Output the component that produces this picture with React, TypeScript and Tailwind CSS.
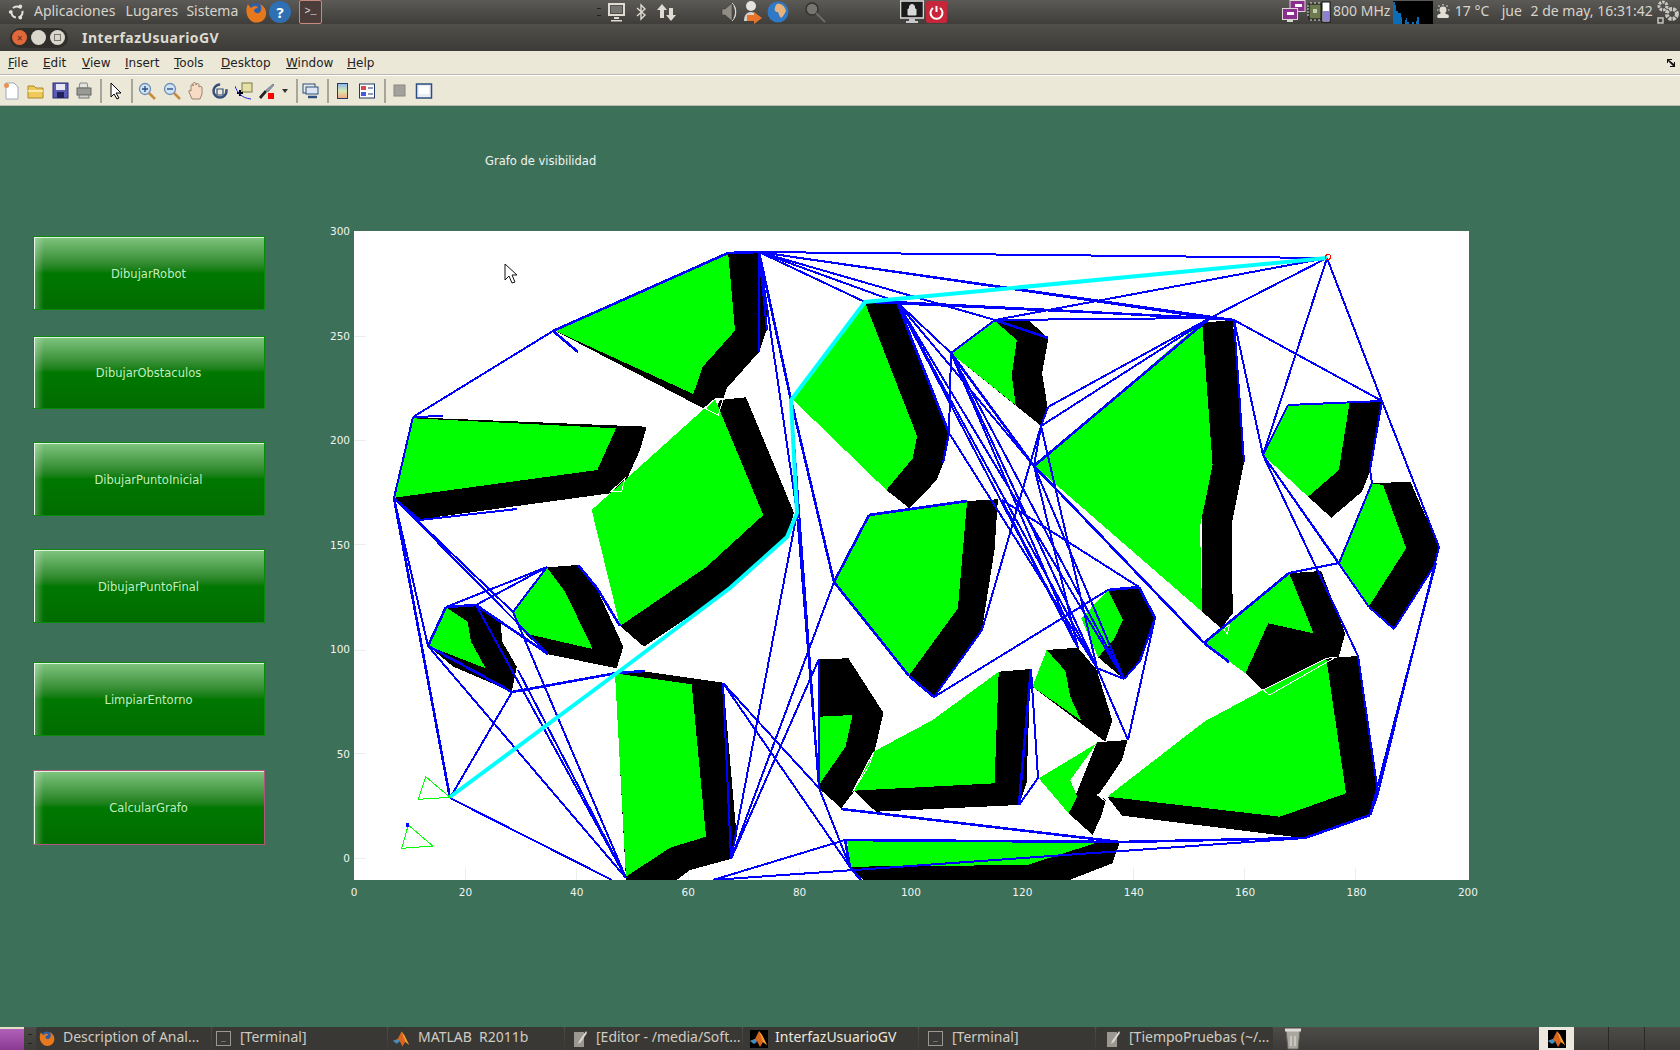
import React from "react";

// zoom crop origins, so shapes can be read straight off the crops
const zones: Record<string, [number, number, number]> = {
  A: [340, 220, 1 / 3],
  B: [340, 550, 1 / 3],
  C: [800, 220, 0.421],
  D: [800, 550, 0.421],
};

function pts(s: string) {
  return s
    .trim()
    .split(/\s+/)
    .map((t) => {
      const z = zones[t[0]];
      const [x, y] = t.slice(1).split(",").map(Number);
      return `${(z[0] + x * z[2]).toFixed(1)},${(z[1] + y / 3).toFixed(1)}`;
    })
    .join(" ");
}

// black hull first, then the green core on top
const obstacles: [string, string][] = [
  ["A645,332 A1165,100 A1258,97 A1282,270 A1280,330 A1258,395 A1160,505 A1150,535 A1125,535 A1090,565", "A645,332 A1165,103 A1185,332 A1088,440 A1060,522"],
  ["A220,592 A920,620 A900,690 A862,775 A810,820 A240,898 A163,833", "A220,595 A828,625 A772,750 A163,833"],
  ["A1140,540 A1218,532 A1362,878 A1340,950 B1175,115 B912,290 B840,228", "A1125,537 A1270,885 B1100,50 B840,228 A755,870"],
  ["B318,170 B408,165 B482,220 B487,275 B530,350 B515,425 B340,350 B265,288", "B318,172 B383,215 B393,275 B437,355 B265,288"],
  ["B620,52 B715,45 B770,115 B850,290 B830,355 B625,313 B553,250", "B620,52 B675,125 B758,297 B553,250 B520,185"],
  ["B825,365 B920,365 B1150,398 B1190,860 B1172,927 B1050,960 B1010,990 B858,990", "B825,370 B1055,403 B1098,860 B990,893 B858,980"],
  ["C155,250 C230,245 C355,640 C340,730 C325,780 C260,865 C205,810", "C155,250 A1360,540 C205,810 C268,715 C278,648"],
  ["C462,300 C540,297 C590,355 C575,460 C588,560 C573,618 C358,400", "C462,302 C515,360 C503,465 C512,555 C358,400"],
  ["C955,308 C1028,300 C1055,725 C1025,915 D1028,190 D1000,235 D955,185", "C955,305 C980,735 C950,920 D955,185 C557,738"],
  ["C1160,557 C1380,542 C1355,750 C1335,815 C1262,893 C1207,830", "C1160,557 C1305,550 C1280,750 C1207,830 C1100,705"],
  ["C1358,790 C1450,785 C1518,980 D1510,40 D1412,238 D1352,172", "C1358,790 C1385,795 C1440,985 D1350,172 D1280,40"],
  ["C397,843 C470,838 D462,0 D432,240 D318,442 D258,378", "C165,885 C397,843 D375,175 D258,378 D80,95"],
  ["D45,328 D115,325 D198,488 D178,600 D128,725 D98,775 D45,715", "D45,500 D125,495 D108,590 D45,705"],
  ["D472,365 D548,357 D538,700 D520,765 D180,785 D128,722", "D175,605 D315,510 D472,365 D462,700 D128,722"],
  ["D732,120 D805,112 D843,205 D808,333 D770,388 D708,322", "D732,120 D767,210 D745,270 D708,322 D668,205"],
  ["D586,300 D660,293 D705,360 D742,512 D725,575 D552,410", "D586,300 D630,362 D642,440 D668,512 D552,410"],
  ["D705,577 D778,570 D765,630 D725,705 D708,735 D727,750 D715,800 D695,855 D638,790", "D705,580 D642,690 D658,740 D638,790 D567,685"],
  ["D1250,325 D1325,318 D1372,730 D1355,795 D1200,865 D765,797 D730,740", "D1250,325 D1297,730 D1140,800 D730,740 D960,515 D1100,420"],
  ["D1162,70 D1238,63 D1295,250 D1280,320 D1250,325 D1100,420 D1058,370", "D1162,70 D1220,250 D1112,220 D1058,370 D960,280"],
  ["D112,870 D760,875 D742,940 D640,990 D150,990 D118,950", "D112,870 D700,880 D540,945 D118,950"],
];

const outlines = [
  "A1095,565 A1125,537 A1150,535 A1135,585",
  "A855,775 A845,815 A812,815",
  "D1100,420 D1250,325 D1272,322 D1115,435",
  "D175,605 D165,645 D125,725",
  "D707,735 D727,720 D733,738 D727,755",
  "D1020,225 D1015,252 D1005,235",
];

// graph vertices in page pixels
const V: Record<string, [number, number]> = {
  G: [1327, 258], a: [728, 253], b: [759, 252], c: [553, 331], d: [413, 417], e: [394, 498], f: [578, 352],
  g: [759, 352], h: [767, 330], i: [791, 400], j: [797, 513], k: [865, 302], l: [897, 302], m: [949, 433],
  n: [943, 463], o: [951, 353], p: [995, 320], q: [1048, 338], r: [1041, 426], s: [1048, 407], t: [1034, 466],
  u: [1210, 318], v: [1234, 320], w: [1244, 462], x: [1263, 455], y: [1382, 401], z: [1370, 470], aa: [1372, 483],
  ab: [1439, 547], ac: [1436, 563], ad: [1394, 629], ae: [1339, 563], af: [1369, 607], ag: [1289, 573], ah: [1204, 643],
  ai: [1229, 662], aj: [1358, 656], ak: [1378, 793], al: [1370, 815], am: [1305, 838], an: [834, 582], ao: [869, 515],
  ap: [967, 501], aq: [909, 676], ar: [934, 697], as: [883, 713], at: [819, 659], au: [819, 788], av: [841, 809],
  aw: [1031, 669], ax: [1019, 805], ay: [1038, 778], az: [1108, 590], ba: [1139, 587], bb: [1155, 618], bc: [1140, 661],
  bd: [1124, 679], be: [1128, 740], bf: [1097, 668], bg: [1078, 648], bh: [845, 840], bi: [850, 867], bj: [861, 880],
  bk: [1120, 842], bl: [446, 607], bm: [547, 567], bn: [428, 646], bo: [476, 605], bp: [548, 654], bq: [513, 612],
  br: [512, 692], bs: [518, 670], bt: [617, 673], bu: [645, 671], bv: [723, 683], bw: [731, 859], bx: [450, 798],
  by: [626, 878], bz: [578, 565], ca: [620, 626], cb: [597, 588], cc: [612, 880], cd: [713, 880], ce: [1002, 500],
  cf: [982, 630], cg: [1288, 405], ch: [443, 416], ci: [420, 520], cj: [517, 509],
};

const thinEdges =
  "b-G b-u b-v b-p b-l b-k b-h b-g b-j c-d d-e p-G u-G k-u l-u l-v p-u v-y y-ab G-y G-x x-cg y-cg y-z z-aa " +
  "v-x v-w x-ae x-aj x-af ae-aa e-bn e-bx e-bq e-bp bq-by bo-by bs-by bn-by bx-cc bx-br bl-bm bm-bq " +
  "bv-bw bw-j bw-an bw-at bv-au bv-bi au-bi j-au i-au at-au cd-bh bm-bo " +
  "l-bf l-bg l-bd l-t o-bf o-bg o-bd o-m o-p l-o m-n t-bg t-bd r-bf r-s r-t s-u r-u " +
  "cf-r ar-cf ar-az ce-ba ce-bg t-ah m-bf bb-bc bc-bd bd-bf bf-be bb-be ba-bb ae-ag aj-ak " +
  "ab-ak ad-ac af-ad cd-am ay-ax aw-ay ac-al d-ch e-ci ci-cj";
const thickEdges =
  "a-b c-a c-f b-i i-an an-ao ao-ap an-aq ar-aq e-bx br-bt bt-bu bl-bn bl-bo bo-bp bn-br bz-cb cb-ca " +
  "t-u t-ah ah-ai ag-ah o-t l-m k-l av-bk bh-bk bk-am am-al al-ak bh-bi bi-bj aw-ax az-ba u-v ba-bb p-q";

function edgePath(list: string) {
  return list
    .trim()
    .split(/\s+/)
    .map((pair) => {
      const [p, q] = pair.split("-");
      return `M${V[p][0]} ${V[p][1]}L${V[q][0]} ${V[q][1]}`;
    })
    .join("");
}

function Plot() {
  return (
    <svg viewBox="354 231 1115 649" className="block h-[649px] w-[1115px] bg-white" shapeRendering="crispEdges">
      {/* faint ticks */}
      <path
        d="M354 336h12M354 440h12M354 544h12M354 650h12M354 753h12M354 858h12M465 880v-12M576 880v-12M688 880v-12M799 880v-12M910 880v-12M1021 880v-12M1133 880v-12M1244 880v-12M1355 880v-12"
        stroke="#e8efec"
        strokeWidth="1"
      />
      {obstacles.map(([hull, core], n) => (
        <g key={n}>
          <polygon points={pts(hull)} fill="#000" />
          <polygon points={pts(core)} fill="#00ff00" />
        </g>
      ))}
      {outlines.map((o, n) => (
        <polygon key={n} points={pts(o)} fill="none" stroke="#fff" strokeWidth="1" />
      ))}
      <path d={edgePath(thinEdges)} stroke="#0000ff" strokeWidth="2" fill="none" />
      <path d={edgePath(thickEdges)} stroke="#0000ff" strokeWidth="2.6" fill="none" />
      <polyline
        points="450,797 617,673 730,588 787,537 797,513 791,400 865,302 1327,258"
        fill="none"
        stroke="#00ffff"
        strokeWidth="4"
        shapeRendering="auto"
      />
      <polygon points={pts("B257,680 B235,748 B330,742")} fill="none" stroke="#00ff00" strokeWidth="1" />
      <polygon points={pts("B205,825 B185,895 B278,888")} fill="none" stroke="#00ff00" strokeWidth="1" />
      <rect x="406" y="823" width="3" height="4" fill="#0000ff" />
      <circle cx="1328" cy="257" r="2.5" fill="none" stroke="#ff0000" strokeWidth="1" />
      {/* mouse pointer */}
      <path
        d="M505 264v16l4-4 3 7 3-1-3-7h5z"
        fill="#fff"
        stroke="#111"
        strokeWidth="1"
        shapeRendering="auto"
      />
    </svg>
  );
}

function UbuntuLogo() {
  return (
    <svg width="18" height="18" viewBox="0 0 18 18" className="ml-[8px]">
      <circle cx="9" cy="9" r="5.6" fill="none" stroke="#e6e2da" strokeWidth="2" strokeDasharray="9 2.7" strokeDashoffset="2" />
      <circle cx="2.6" cy="9" r="1.8" fill="#e6e2da" />
      <circle cx="12.4" cy="3.2" r="1.8" fill="#e6e2da" />
      <circle cx="12.4" cy="14.8" r="1.8" fill="#e6e2da" />
    </svg>
  );
}

function Firefox({ size = 23 }: { size?: number }) {
  return (
    <svg width={size} height={size} viewBox="0 0 23 23">
      <circle cx="12" cy="11" r="9" fill="#2c5fa8" />
      <path d="M4 3c-3 6-2 14 5 18 6 2 12-1 13-7 1-5-2-9-6-11 2 3 2 7-1 9-3 1-5-1-5-3 1-2 3-1 4-3-2-2-5-1-7 1-1-1-2-2-3-4z" fill="#e8781c" />
    </svg>
  );
}

function Terminal() {
  return (
    <div className="flex h-[24px] w-[23px] items-center justify-center rounded-[2px] border border-[#c58a80] bg-[#4c3d3b] text-[10px] leading-none text-[#ddd]">
      <span className="font-['Liberation_Mono',monospace]">&gt;_</span>
    </div>
  );
}

function Monitor() {
  return (
    <svg width="17" height="20" viewBox="0 0 17 20">
      <rect x="1" y="2" width="15" height="11" fill="none" stroke="#dfdbd2" strokeWidth="2" />
      <rect x="3" y="4" width="11" height="7" fill="#76746e" />
      <path d="M6 15h5v2H6zM3 18h11v1.5H3z" fill="#dfdbd2" />
    </svg>
  );
}

function Bluetooth() {
  return (
    <svg width="10" height="18" viewBox="0 0 10 18">
      <path d="M1 5l8 7-4 4V2l4 4-8 7" fill="none" stroke="#dfdbd2" strokeWidth="1.4" />
    </svg>
  );
}

function NetArrows() {
  return (
    <svg width="19" height="19" viewBox="0 0 19 19">
      <path d="M5 1l5 6H7v8H3V7H0zM14 18l5-6h-3V5h-4v7H9z" fill="#dfdbd2" />
    </svg>
  );
}

function Speaker() {
  return (
    <svg width="17" height="22" viewBox="0 0 17 22">
      <path d="M1 8h3l7-6v18l-7-6H1z" fill="#8f8d86" stroke="#2e2d2a" strokeWidth="0.5" />
      <path d="M11 2c5 4 5 14 0 18M13 5c2 3 2 9 0 12" fill="none" stroke="#dfdbd2" strokeWidth="1" />
    </svg>
  );
}

function UserSwitch() {
  return (
    <svg width="20" height="24" viewBox="0 0 20 24">
      <circle cx="8" cy="6" r="5" fill="#e5e3df" />
      <path d="M1 21c0-6 3-9 7-9s7 3 7 9z" fill="#d3d1cc" />
      <path d="M4 15h7v-3l8 6-8 6v-3H4z" fill="#e8742a" />
    </svg>
  );
}

function Globe() {
  return (
    <svg width="22" height="22" viewBox="0 0 22 22">
      <circle cx="11" cy="11" r="10.5" fill="#2f79c7" />
      <path d="M10 3c4-1 8 2 9 7-1 2-3 6-5 7-2-2-2-4-3-6-3 0-4-2-3-4 0-2 1-3 2-4z" fill="#e8b27d" />
    </svg>
  );
}

function Magnifier() {
  return (
    <svg width="22" height="22" viewBox="0 0 22 22">
      <circle cx="8" cy="8" r="6" fill="#77756f" stroke="#33322f" strokeWidth="1.5" />
      <path d="M12 12l9 9" stroke="#6c6a65" strokeWidth="2" />
    </svg>
  );
}

function LockScreen() {
  return (
    <svg width="24" height="24" viewBox="0 0 24 24">
      <rect x="0.5" y="1" width="23" height="17" fill="#1b1b1b" stroke="#d5d5d5" strokeWidth="1.6" />
      <path d="M8 9h8v6H8zM9.500 9V7a2.500 2.500 0 0 1 5 0v2" fill="#d8d8d8" stroke="#d8d8d8" strokeWidth="1" />
      <path d="M9 19h6v2h3v2H6v-2h3z" fill="#c9c9c9" />
    </svg>
  );
}

function Power() {
  return (
    <svg width="21" height="22" viewBox="0 0 21 22">
      <rect width="21" height="22" rx="2" fill="#c7263a" />
      <path d="M10.500 5v6" stroke="#fff" strokeWidth="2" />
      <path d="M7 7a6 6 0 1 0 7 0" fill="none" stroke="#fff" strokeWidth="2" />
    </svg>
  );
}

function RemoteDesktops() {
  return (
    <svg width="24" height="24" viewBox="0 0 24 24">
      <rect x="8" y="0.500" width="15" height="11" fill="#8b2f8f" stroke="#d9d7d2" />
      <rect x="0.500" y="8.500" width="15" height="11" fill="#8b2f8f" stroke="#d9d7d2" />
      <rect x="5" y="12" width="7" height="3" fill="#fff" />
      <rect x="13" y="4" width="7" height="3" fill="#fff" />
      <path d="M5 20h6v2H5z" fill="#d9d7d2" />
    </svg>
  );
}

function Cpu() {
  return (
    <svg width="24" height="22" viewBox="0 0 24 22">
      <rect x="2" y="3" width="12" height="15" fill="#6d7a4f" stroke="#111" />
      <rect x="6" y="8" width="4" height="4" fill="#c7c9b0" />
      <path d="M0 5h2M0 8h2M0 11h2M0 14h2M4 1v2M8 1v2M12 1v2M4 18v2M8 18v2M12 18v2" stroke="#ddd" />
      <rect x="15" y="1" width="8" height="20" fill="#fff" stroke="#111" />
      <rect x="16" y="10" width="6" height="10" fill="#8c80d0" />
    </svg>
  );
}

function LoadGraph() {
  return (
    <svg width="40" height="23" viewBox="0 0 40 23" className="ml-[5px] bg-black" shapeRendering="crispEdges">
      <path d="M0 23V1h2v3h1v6h2v2h3v4h1v7zM12 23v-4h1v-2h1v4h2v2zM19 23v-2h2v2zM23 23v-3h1v-4h2v7z" fill="#0a6db5" />
    </svg>
  );
}

function Weather() {
  return (
    <svg width="16" height="16" viewBox="0 0 16 16" className="ml-[3px]">
      <circle cx="7" cy="6" r="3.500" fill="#e2ded3" />
      <path d="M7 0v1.500M1 6h1.500M12 6h1.500M2.500 1.500l1 1M11.500 1.500l-1 1" stroke="#e2ded3" strokeWidth="1.2" />
      <path d="M2 14c-2-2 0-4 2-4 1-2 5-2 6 0 3 0 4 3 2 4z" fill="#e2ded3" />
    </svg>
  );
}

function Gears() {
  return (
    <svg width="24" height="24" viewBox="0 0 24 24" className="ml-[1px]">
      <circle cx="7" cy="6" r="4" fill="none" stroke="#c9c7c1" strokeWidth="3" strokeDasharray="2.500 1" />
      <circle cx="16" cy="14" r="5" fill="none" stroke="#c9c7c1" strokeWidth="4" strokeDasharray="3 1" />
      <rect x="2" y="18" width="5" height="5" fill="none" stroke="#c9c7c1" strokeWidth="1.500" />
    </svg>
  );
}

function TopPanel() {
  return (
    <div className="flex h-[24px] items-center bg-gradient-to-b from-[#5b5a56] to-[#3f3e3a] font-['Noto_Sans',sans-serif] text-[14px] leading-[18px] text-[#d8d4cb]">
      <UbuntuLogo />
      <span className="-mt-[3px] ml-[8px] w-[92px]">Aplicaciones</span>
      <span className="-mt-[3px] w-[61px]">Lugares</span>
      <span className="-mt-[3px] w-[58px]">Sistema</span>
      <Firefox />
      <div className="ml-[2px] flex h-[22px] w-[22px] items-center justify-center rounded-full bg-[#2f6fb3] text-[15px] font-bold text-white">?</div>
      <div className="ml-[8px]">
        <Terminal />
      </div>
      <div className="ml-[275px] h-[8px] w-[4px] border-y border-[#222]" />
      <div className="ml-[7px]"><Monitor /></div>
      <div className="ml-[11px]"><Bluetooth /></div>
      <div className="ml-[11px]"><NetArrows /></div>
      <div className="ml-[45px]"><Speaker /></div>
      <div className="ml-[5px]"><UserSwitch /></div>
      <div className="ml-[4px]"><Globe /></div>
      <div className="ml-[15px]"><Magnifier /></div>
      <div className="ml-[74px]"><LockScreen /></div>
      <div className="ml-[2px]"><Power /></div>
      <div className="ml-[335px]"><RemoteDesktops /></div>
      <div className="ml-[1px]"><Cpu /></div>
      <span className="-mt-[3px] ml-[2px] w-[55px] whitespace-nowrap">800 MHz</span>
      <LoadGraph />
      <Weather />
      <span className="-mt-[3px] ml-[3px] w-[47px] whitespace-nowrap">17 °C</span>
      <span className="-mt-[3px] w-[29px]">jue</span>
      <span className="-mt-[3px] w-[125px] whitespace-nowrap">2 de may, 16:31:42</span>
      <Gears />
    </div>
  );
}

function TitleBar() {
  return (
    <div className="flex h-[27px] items-center bg-gradient-to-b from-[#504f4a] to-[#3c3b37]">
      <div className="ml-[10px] flex h-[20px] w-[58px] items-center gap-[4px] rounded-full bg-[#2f2e2b] px-[2px]">
        <div className="flex h-[15px] w-[15px] items-center justify-center rounded-full bg-[#e0683a] text-[10px] leading-none text-[#5a2a18]">×</div>
        <div className="h-[15px] w-[15px] rounded-full bg-[#d9d6cc]" />
        <div className="flex h-[15px] w-[15px] items-center justify-center rounded-full bg-[#d9d6cc]">
          <div className="h-[7px] w-[7px] border border-[#77756f]" />
        </div>
      </div>
      <span className="ml-[14px] font-['Noto_Sans',sans-serif] text-[14px] font-bold tracking-[0.45px] text-[#dfdbd2]">InterfazUsuarioGV</span>
    </div>
  );
}

const menus: [string, string, string][] = [
  ["F", "ile", "w-[35px]"],
  ["E", "dit", "w-[39px]"],
  ["V", "iew", "w-[43px]"],
  ["I", "nsert", "w-[49px]"],
  ["T", "ools", "w-[47px]"],
  ["D", "esktop", "w-[65px]"],
  ["W", "indow", "w-[61px]"],
  ["H", "elp", "w-[40px]"],
];

function MenuBar() {
  return (
    <div className="flex h-[24px] items-center border-b border-[#bcbab0] bg-[#ebe8d8] pl-[8px] font-['DejaVu_Sans',sans-serif] text-[12px] text-[#222]">
      {menus.map(([first, rest, w]) => (
        <span key={first} className={w}>
          <span className="underline">{first}</span>
          {rest}
        </span>
      ))}
      <svg width="9" height="8" viewBox="0 0 9 8" className="ml-auto mr-[4px]">
        <path d="M0 0h5v1H2l5 4V3h1v5H3V7h3L1 2v2H0z" fill="#111" />
      </svg>
    </div>
  );
}

function Glyph({ children, className }: { children: React.ReactNode; className?: string }) {
  return (
    <svg width="18" height="18" viewBox="0 0 18 18" className={className}>
      {children}
    </svg>
  );
}

const Sep = ({ ml }: { ml: string }) => <div className={`${ml} h-[24px] w-[2px] bg-[#a8a69c]`} />;

function Lens({ sign }: { sign: string }) {
  return (
    <>
      <path d="M10 10l7 7" stroke="#c88b3a" strokeWidth="2.500" />
      <circle cx="7" cy="7" r="5.500" fill="#cfe3f5" stroke="#6d8db5" strokeWidth="1.300" />
      <path d={sign} stroke="#2d4f88" strokeWidth="1.400" />
    </>
  );
}

function ToolBar() {
  return (
    <div className="flex h-[31px] items-center border-y border-t-white border-b-[#bcbab0] bg-[#ebe8d8] pl-[3px]">
      <Glyph>
        <path d="M3 1h8l4 4v12H3z" fill="#fff" stroke="#9ab" />
        <circle cx="3.500" cy="3.500" r="2.500" fill="#e8905a" />
      </Glyph>
      <Glyph className="ml-[6px]">
        <path d="M1 16V4h6l2 2h7v10z" fill="#f0c95a" stroke="#a98a2c" />
        <path d="M1 9h15" stroke="#fff3c0" strokeWidth="1.500" />
      </Glyph>
      <Glyph className="ml-[6px]">
        <rect x="2" y="1" width="15" height="15" fill="#5c5cb8" stroke="#2c2c70" />
        <rect x="5" y="2" width="9" height="6" fill="#e8e8f5" />
        <rect x="6" y="10" width="7" height="6" fill="#22225a" />
      </Glyph>
      <Glyph className="ml-[6px]">
        <path d="M5 1h7l1 5H4z" fill="#e5e5e0" stroke="#888" />
        <rect x="2" y="6" width="14" height="7" fill="#9a9a94" stroke="#666" />
        <rect x="4" y="13" width="10" height="3" fill="#d0d0ca" stroke="#777" />
      </Glyph>
      <Sep ml="ml-[7px]" />
      <Glyph className="ml-[6px]">
        <path d="M3 1v14l3-3 3 5 2-1-3-5h5z" fill="#fff" stroke="#000" />
      </Glyph>
      <Sep ml="ml-[5px]" />
      <Glyph className="ml-[5px]"><Lens sign="M4 7h6M7 4v6" /></Glyph>
      <Glyph className="ml-[7px]"><Lens sign="M4 7h6" /></Glyph>
      <Glyph className="ml-[6px]">
        <path d="M5 17L2 10c-1-2 1-2 2-1V4c0-2 2-2 2 0V2c0-2 3-2 3 0v1c0-2 3-2 3 0v2c1-1 3-1 3 1v6l-2 5z" fill="#f7dcc4" stroke="#8a6a55" strokeWidth="0.800" />
      </Glyph>
      <Glyph className="ml-[6px]">
        <circle cx="9" cy="9" r="6.500" fill="none" stroke="#354f78" strokeWidth="2.500" strokeDasharray="30 8" />
        <path d="M6 7h6v6H6z" fill="none" stroke="#354f78" strokeWidth="1.200" />
      </Glyph>
      <Glyph className="ml-[6px]">
        <rect x="7" y="1" width="10" height="9" fill="#e4e0a8" stroke="#7a7a40" />
        <path d="M2 11h6M5 8v6" stroke="#000" strokeWidth="2" />
        <path d="M0 4c2 6 6 12 16 13" fill="none" stroke="#2222dd" />
      </Glyph>
      <Glyph className="ml-[5px]">
        <path d="M1 15l6-7 2 2-6 7z" fill="#222" />
        <path d="M8 8l7-6 1 1-6 7z" fill="#8ea0b5" stroke="#445" strokeWidth="0.500" />
        <rect x="10" y="11" width="6" height="6" fill="#f00" />
      </Glyph>
      <svg width="6" height="4" viewBox="0 0 6 4" className="ml-[6px]"><path d="M0 0h6L3 4z" fill="#333" /></svg>
      <Sep ml="ml-[8px]" />
      <Glyph className="ml-[4px]">
        <rect x="1" y="2" width="12" height="9" fill="#e8e8e8" stroke="#2c4f80" />
        <rect x="4" y="5" width="12" height="7" fill="#dbe6f2" stroke="#2c4f80" />
        <path d="M6 15h5M9 15h6" stroke="#2c4f80" strokeWidth="2.500" />
      </Glyph>
      <Sep ml="ml-[7px]" />
      <div className="ml-[8px] h-[16px] w-[11px] border border-[#223a66] bg-gradient-to-b from-[#8fb7e8] via-[#d8e8b0] to-[#f0a888]" />
      <Glyph className="ml-[10px]">
        <rect x="1.500" y="2" width="15" height="14" fill="#fff" stroke="#223a66" />
        <rect x="3" y="4" width="5" height="4" fill="#d84a4a" />
        <rect x="3" y="10" width="5" height="4" fill="#4a5ad8" />
        <path d="M10 6h5M10 12h5" stroke="#223a66" />
      </Glyph>
      <Sep ml="ml-[8px]" />
      <Glyph className="ml-[5px]">
        <rect x="3" y="3" width="11" height="11" fill="#a3a19b" stroke="#8a8880" />
      </Glyph>
      <Glyph className="ml-[6px]">
        <rect x="1.500" y="2" width="15" height="14" fill="#e9eef5" stroke="#2c4f80" strokeWidth="1.500" />
        <rect x="4" y="4" width="10" height="8" fill="#fff" />
      </Glyph>
    </div>
  );
}

const buttons: [string, string, string][] = [
  ["DibujarRobot", "mt-0 h-[74px]", "border-[#0a8a0a]"],
  ["DibujarObstaculos", "mt-[26px] h-[73px]", "border-[#0a8a0a]"],
  ["DibujarPuntoInicial", "mt-[33px] h-[74px]", "border-[#0a8a0a]"],
  ["DibujarPuntoFinal", "mt-[33px] h-[74px]", "border-[#0a8a0a]"],
  ["LimpiarEntorno", "mt-[39px] h-[74px]", "border-[#0a8a0a]"],
  ["CalcularGrafo", "mt-[34px] h-[75px]", "border-[#b0567a]"],
];

function SideButton({ label, box, edge }: { label: string; box: string; edge: string }) {
  return (
    <div
      className={`${box} ${edge} relative flex w-[232px] items-center justify-center border bg-gradient-to-b from-[#80c580] via-[#007800] via-50% to-[#006c00] pr-[1px] pt-[3px] font-['DejaVu_Sans',sans-serif] text-[11.500px] text-[#c4ecc4]`}
    >
      <div className="absolute inset-0 border-l border-t border-[#dff2df]" />
      <div className="absolute inset-y-0 left-0 w-[10px] bg-gradient-to-r from-white/30 to-transparent" />
      <span className="relative">{label}</span>
    </div>
  );
}

function Figure() {
  const yLabels = ["300", "250", "200", "150", "100", "50", "0"];
  const xLabels = ["0", "20", "40", "60", "80", "100", "120", "140", "160", "180", "200"];
  return (
    <div className="flex flex-1 bg-[#3d7058] font-['DejaVu_Sans',sans-serif] text-[#f0f4f2]">
      <div className="ml-[33px] flex w-[231px] shrink-0 flex-col pt-[130px]">
        {buttons.map(([label, box, edge]) => (
          <SideButton key={label} label={label} box={box} edge={edge} />
        ))}
      </div>
      <div className="flex flex-col">
        <div className="h-[125px] pl-[221px] pt-[47px] text-[11.500px] leading-[16px]">Grafo de visibilidad</div>
        <div className="ml-[50px] flex items-start">
          <div className="-mt-[6px] flex h-[639px] w-[36px] flex-col justify-between text-right text-[10.500px] leading-[12px]">
            {yLabels.map((l) => (
              <span key={l}>{l}</span>
            ))}
          </div>
          <div className="ml-[4px]">
            <Plot />
          </div>
        </div>
        <div className="ml-[70px] mt-[6px] flex w-[1154px] justify-between text-[10.500px] leading-[12px]">
          {xLabels.map((l) => (
            <span key={l} className="w-[40px] text-center">
              {l}
            </span>
          ))}
        </div>
      </div>
    </div>
  );
}

function MatlabLogo() {
  return (
    <svg width="18" height="18" viewBox="0 0 18 18">
      <path d="M0 11l5-2 4-8 3 4 5 10-4-3-3 5-3-6z" fill="#d9641e" />
      <path d="M0 11l5-2 2 3-3 2z" fill="#3f8fc5" />
      <path d="M9 1l3 4 5 10-4-3z" fill="#f0a030" />
    </svg>
  );
}

function TermIcon() {
  return (
    <div className="flex h-[15px] w-[15px] items-center justify-center border border-[#9a9890] bg-[#3a3a38] text-[8px] leading-none text-[#ccc]">
      <span className="font-['Liberation_Mono',monospace]">_</span>
    </div>
  );
}

function NoteIcon() {
  return (
    <svg width="14" height="18" viewBox="0 0 14 18">
      <path d="M1 2h10v15H1z" fill="#9a9890" />
      <path d="M13 1L6 11l-1 3 3-2 6-9z" fill="#d8d6cf" />
    </svg>
  );
}

const tasks: { label: string; icon: React.ReactNode; cls: string }[] = [
  { label: "Description of Anal...", icon: <Firefox size={17} />, cls: "w-[175px] pl-[2px]" },
  { label: "[Terminal]", icon: <TermIcon />, cls: "w-[175px] pl-[3px]" },
  { label: "MATLAB  R2011b", icon: <MatlabLogo />, cls: "w-[176px] pl-[5px]" },
  { label: "[Editor - /media/Soft...", icon: <NoteIcon />, cls: "w-[177px] pl-[6px]" },
  { label: "InterfazUsuarioGV", icon: <div className="bg-black"><MatlabLogo /></div>, cls: "w-[175px] bg-[#6d6454] pl-[7px] text-[#ece8dd]" },
  { label: "[Terminal]", icon: <TermIcon />, cls: "w-[176px] pl-[8px]" },
  { label: "[TiempoPruebas (~/...", icon: <NoteIcon />, cls: "w-[177px] pl-[8px]" },
];

function BottomPanel() {
  return (
    <div className="flex h-[23px] items-center bg-gradient-to-b from-[#4d4c48] to-[#3c3b37] font-['Noto_Sans',sans-serif] text-[14px] text-[#cfcbc2]">
      <div className="h-[23px] w-[24px] border-t-2 border-[#e6dfc8] bg-gradient-to-b from-[#b060b8] to-[#8b3a92]" />
      <div className="ml-[4px] h-[10px] w-[4px] border-y border-[#222]" />
      <div className="ml-[4px] flex gap-[1px]">
        {tasks.map((t, n) => (
          <div
            key={n}
            className={`flex h-[23px] items-center gap-[8px] overflow-hidden whitespace-pre rounded-[2px] bg-[#393834] ${t.cls}`}
          >
            <span className="flex w-[17px] shrink-0 justify-center">{t.icon}</span>
            <span className="-mt-[3px] leading-[18px]">{t.label}</span>
          </div>
        ))}
      </div>
      <svg width="20" height="23" viewBox="0 0 20 23" className="ml-[10px]">
        <path d="M3 3h14l-2 19H5z" fill="#a9a79f" stroke="#66645e" />
        <path d="M2 3h16" stroke="#dedcd5" strokeWidth="3" />
        <path d="M8 9v10M12 9v10" stroke="#e5e3dc" />
      </svg>
      <div className="ml-auto flex h-[23px]">
        <div className="flex w-[35px] items-center justify-center bg-[#ece8dd]">
          <div className="bg-black"><MatlabLogo /></div>
        </div>
        <div className="w-[35px] border-r border-[#2a2927]" />
        <div className="w-[36px] border-r border-[#2a2927]" />
        <div className="w-[35px]" />
      </div>
    </div>
  );
}

export default function App() {
  return (
    <div className="flex h-screen w-full flex-col overflow-hidden">
      <TopPanel />
      <TitleBar />
      <MenuBar />
      <ToolBar />
      <Figure />
      <BottomPanel />
    </div>
  );
}
